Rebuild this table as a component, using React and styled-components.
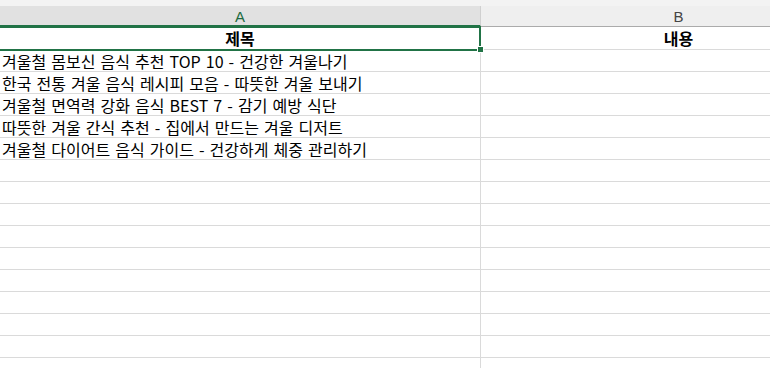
import React from 'react';
import styled, { createGlobalStyle } from 'styled-components';

const GlobalStyle = createGlobalStyle`
  html, body {
    margin: 0;
    padding: 0;
    background: #ffffff;
    overflow: hidden;
  }

  body {
    font-family: 'Noto Sans CJK KR', 'Noto Sans', sans-serif;
  }
`;

const rows = [
  '겨울철 몸보신 음식 추천 TOP 10 - 건강한 겨울나기',
  '한국 전통 겨울 음식 레시피 모음 - 따뜻한 겨울 보내기',
  '겨울철 면역력 강화 음식 BEST 7 - 감기 예방 식단',
  '따뜻한 겨울 간식 추천 - 집에서 만드는 겨울 디저트',
  '겨울철 다이어트 음식 가이드 - 건강하게 체중 관리하기',
];

const EMPTY_ROWS = 10;

function App() {
  return (
    <>
      <GlobalStyle />
      <Sheet>
        <TopStrip />

        <HeaderRow>
          <ColHeader $selected>A</ColHeader>
          <ColHeader>B</ColHeader>
        </HeaderRow>

        <Row $first>
          <Cell $bold $center $selected>
            제목
            <Handle />
          </Cell>
          <Cell $bold $center>내용</Cell>
        </Row>

        {rows.map((title) => (
          <Row key={title}>
            <Cell>{title}</Cell>
            <Cell />
          </Row>
        ))}

        {Array.from({ length: EMPTY_ROWS }).map((_, i) => (
          <Row key={i}>
            <Cell />
            <Cell />
          </Row>
        ))}
      </Sheet>
    </>
  );
}

export default App;

const Sheet = styled.div`
  width: 770px;
  height: 368px;
  overflow: hidden;
  display: flex;
  flex-direction: column;
`;

const TopStrip = styled.div`
  height: 6px;
  flex-shrink: 0;
  background-color: #f3f3f3;
`;

const HeaderRow = styled.div`
  display: grid;
  grid-template-columns: 481px 396px;
  height: 21px;
  flex-shrink: 0;
`;

const ColHeader = styled.div`
  display: flex;
  align-items: center;
  justify-content: center;
  box-sizing: border-box;

  font-family: 'Liberation Sans', 'Noto Sans', sans-serif;
  font-size: 15px;
  color: ${(p) => (p.$selected ? '#1e6b40' : '#444444')};
  background-color: ${(p) => (p.$selected ? '#e1e1e1' : '#efefef')};
  border-right: 1px solid #d0d0d0;
  border-bottom: ${(p) => (p.$selected ? '2px solid #217346' : '1px solid #ababab')};
  padding-top: ${(p) => (p.$selected ? '1px' : '0')};
`;

const Row = styled.div`
  display: grid;
  grid-template-columns: 481px 396px;
  height: ${(p) => (p.$first ? '23px' : '22px')};
  flex-shrink: 0;
`;

const Cell = styled.div`
  position: relative;
  box-sizing: border-box;
  display: flex;
  align-items: center;
  justify-content: ${(p) => (p.$center ? 'center' : 'flex-start')};
  padding-left: ${(p) => (p.$center ? '0' : '2px')};

  font-size: 16px;
  font-weight: ${(p) => (p.$bold ? 700 : 400)};
  word-spacing: ${(p) => (p.$bold ? '0' : '1.5px')};
  line-height: 1;
  color: #000000;
  white-space: nowrap;

  border-right: 1px solid #dadada;
  border-bottom: 1px solid #dadada;

  ${(p) =>
    p.$selected &&
    `
    &::after {
      content: '';
      position: absolute;
      left: -2px;
      top: -1px;
      right: -1px;
      bottom: -2px;
      border: 2px solid #217346;
      pointer-events: none;
    }
  `}
`;

const Handle = styled.span`
  position: absolute;
  right: -4px;
  bottom: -4px;
  width: 5px;
  height: 5px;
  background-color: #217346;
  border: 1px solid #ffffff;
  z-index: 2;
`;
